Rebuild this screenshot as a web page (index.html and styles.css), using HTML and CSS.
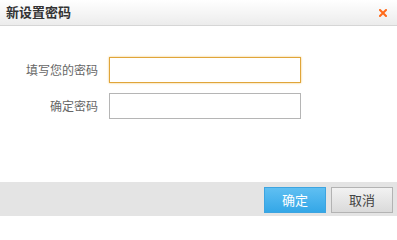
FILE: index.html
```html
<!DOCTYPE html>
<html lang="zh-CN">
<head>
<meta charset="utf-8">
<title>新设置密码</title>
<link rel="stylesheet" href="styles.css">
</head>
<body>
<div class="dialog">
  <div class="header">
    <span class="title">新设置密码</span>
    <span class="close" aria-label="关闭">
      <svg width="8" height="8" viewBox="0 0 8 8"><path d="M1 1L7 7M7 1L1 7" stroke="#ff6a1a" stroke-width="2" stroke-linecap="square"/></svg>
    </span>
  </div>
  <div class="body">
    <div class="row">
      <label class="label">填写您的密码</label>
      <input class="input focus" type="password">
    </div>
    <div class="row">
      <label class="label">确定密码</label>
      <input class="input" type="password">
    </div>
  </div>
  <div class="footer">
    <button class="btn primary">确定</button>
    <button class="btn">取消</button>
  </div>
</div>
</body>
</html>
```
FILE: styles.css
```css
* { box-sizing: border-box; }
html, body { margin: 0; padding: 0; }
body {
  width: 397px;
  height: 216px;
  overflow: hidden;
  font-family: "Noto Sans CJK SC", "Noto Sans", sans-serif;
  background: #fff;
}
.dialog {
  width: 397px;
  height: 216px;
  display: flex;
  flex-direction: column;
}
.header {
  height: 26px;
  flex: none;
  display: flex;
  align-items: center;
  justify-content: space-between;
  padding: 0 10px 1px 6px;
  background: linear-gradient(#ffffff, #ececec);
  border-bottom: 1px solid #d6d6d6;
}
.title {
  font-size: 13px;
  font-weight: bold;
  color: #333;
  line-height: 16px;
}
.close {
  display: flex;
  width: 8px;
  height: 8px;
  margin-top: 2px;
}
.body {
  flex: 1;
  padding-top: 31px;
  display: flex;
  flex-direction: column;
  gap: 10px;
}
.row {
  display: flex;
  align-items: center;
  height: 26px;
}
.label {
  width: 98px;
  text-align: right;
  font-size: 12px;
  color: #666;
  line-height: 16px;
  margin-right: 11px;
}
.input {
  width: 192px;
  height: 26px;
  margin: 0;
  border: 1px solid #b5b5b5;
  background: #fff;
  outline: none;
  padding: 0 4px;
}
.input.focus {
  border-color: #e0a53a;
  box-shadow: 0 0 2px #f2c56a;
}
.footer {
  height: 34px;
  flex: none;
  background: #e4e4e4;
  display: flex;
  justify-content: flex-end;
  align-items: flex-start;
  gap: 5px;
  padding: 5px 4px 0 0;
}
.btn {
  width: 62px;
  height: 26px;
  margin: 0;
  padding: 0;
  font-family: "Noto Sans CJK SC", "Noto Sans", sans-serif;
  font-size: 13px;
  line-height: 24px;
  color: #444;
  border: 1px solid #b3b3b3;
  background: linear-gradient(#f2f2f2, #dadada);
}
.btn.primary {
  color: #fff;
  border-color: #3da4e0;
  background: linear-gradient(#5fbff2, #34a7e7);
}
```
